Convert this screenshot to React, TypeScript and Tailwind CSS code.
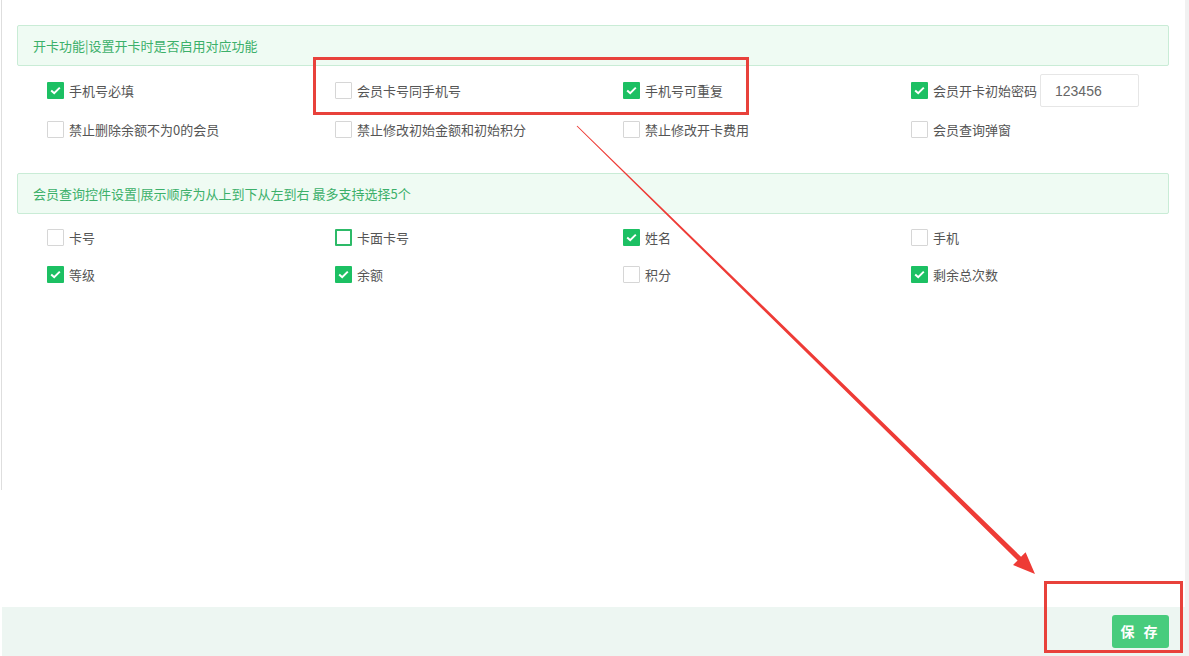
/**
 * Member card settings panel
 */
import { useState } from "react";

type Item = { label: string; checked: boolean; focus?: boolean; input?: string };

const openCardItems: Item[] = [
  { label: "手机号必填", checked: true },
  { label: "会员卡号同手机号", checked: false },
  { label: "手机号可重复", checked: true },
  { label: "会员开卡初始密码", checked: true, input: "123456" },
  { label: "禁止删除余额不为0的会员", checked: false },
  { label: "禁止修改初始金额和初始积分", checked: false },
  { label: "禁止修改开卡费用", checked: false },
  { label: "会员查询弹窗", checked: false },
];

const queryItems: Item[] = [
  { label: "卡号", checked: false },
  { label: "卡面卡号", checked: false, focus: true },
  { label: "姓名", checked: true },
  { label: "手机", checked: false },
  { label: "等级", checked: true },
  { label: "余额", checked: true },
  { label: "积分", checked: false },
  { label: "剩余总次数", checked: true },
];

function CheckBox({ item }: { item: Item }) {
  const [checked, setChecked] = useState(item.checked);
  return (
    <label className="flex cursor-pointer items-center">
      <span
        onClick={() => setChecked(!checked)}
        className={
          checked
            ? "flex h-[17px] w-[17px] items-center justify-center rounded-[1px] bg-[#1cc063]"
            : item.focus
              ? "h-[17px] w-[17px] rounded-[1px] border-2 border-[#2dba68] bg-white"
              : "h-[17px] w-[17px] rounded-[1px] border border-[#d6d6d6] bg-white"
        }
      >
        {checked && (
          <svg width="11" height="9" viewBox="0 0 11 9" fill="none">
            <path d="M1.2 4.4 L4.2 7.2 L9.8 1.6" stroke="white" strokeWidth="2" />
          </svg>
        )}
      </span>
      <span className="ml-[5px] text-[13px] text-[#555]">{item.label}</span>
      {item.input && (
        <input
          defaultValue={item.input}
          className="ml-[3px] h-[33px] w-[99px] rounded-[2px] border border-[#e6e6e6] px-[14px] font-['Liberation_Sans',sans-serif] text-[14px] text-[#666] outline-none"
        />
      )}
    </label>
  );
}

function Section({ title, items, rowH }: { title: string; items: Item[]; rowH: string }) {
  return (
    <div>
      <div className="flex h-[41px] items-center rounded-[2px] border border-[#c9ecd6] bg-[#effbf3] pl-[15px] text-[13px] text-[#3cb06a]">
        {title}
      </div>
      <div className="mt-[5px] grid grid-cols-4">
        {items.map((it) => (
          <div key={it.label} className={`flex items-center pl-[30px] ${rowH}`}>
            <CheckBox item={it} />
          </div>
        ))}
      </div>
    </div>
  );
}

export default function App() {
  return (
    <div className="relative flex h-[656px] w-full overflow-hidden bg-white font-['Noto_Sans_CJK_SC',sans-serif]">
      <div className="flex flex-1 flex-col">
        <div className="flex flex-1">
          {/* left rail */}
          <div className="h-[490px] w-[2px] border-r border-[#dedede]" />
          <div className="flex-1 pl-[15px] pr-[16px] pt-[25px]">
            <Section title="开卡功能|设置开卡时是否启用对应功能" items={openCardItems} rowH="h-[39px]" />
            <div className="mt-[24px]">
              <Section
                title="会员查询控件设置|展示顺序为从上到下从左到右 最多支持选择5个"
                items={queryItems}
                rowH="h-[37px]"
              />
            </div>
          </div>
        </div>

        {/* Footer */}
        <div className="ml-[2px] flex h-[49px] items-center justify-end bg-[#edf6f2] pr-[16px]">
          <button className="h-[33px] w-[57px] rounded-[3px] bg-[#48cc7d] text-[14px] font-bold tracking-[3px] text-white">
            保 存
          </button>
        </div>
      </div>
      <div className="w-[4px] bg-[#f1f1f1]" />

      {/* annotation overlay */}
      <svg className="pointer-events-none absolute left-0 top-0" width="1189" height="656">
        <rect x="314.5" y="58.5" width="433" height="55" fill="none" stroke="#e8413b" strokeWidth="3" />
        <rect x="1045.5" y="582.5" width="136" height="69" fill="none" stroke="#e8413b" strokeWidth="3" />
        <polygon
          points="577.35,125.64 1021.05,556.81 1025.6,552.2 1035,574 1013,565 1017.55,560.39 576.65,126.36"
          fill="#ee3b36"
        />
      </svg>
    </div>
  );
}
